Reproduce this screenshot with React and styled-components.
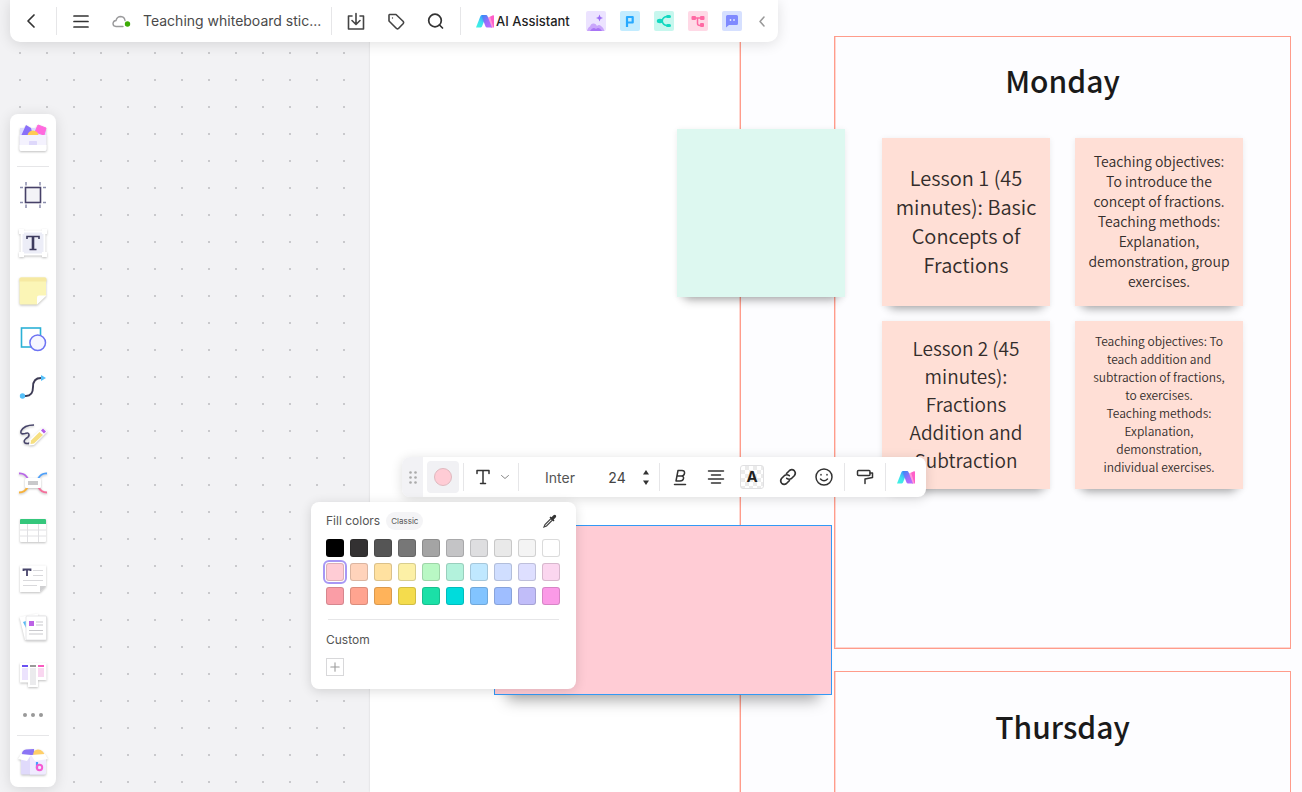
import React from "react";
import styled, { createGlobalStyle } from "styled-components";

const GlobalStyle = createGlobalStyle`
  * {
    box-sizing: border-box;
  }
  body {
    margin: 0;
    overflow: hidden;
    font-family: Inter, "Liberation Sans", sans-serif;
    color: #333;
  }
  button, input, select {
    margin: 0;
    padding: 0;
    border: 0;
    background: none;
    font: inherit;
    color: inherit;
  }
  button {
    cursor: pointer;
  }
  svg {
    display: block;
    overflow: visible;
  }
`;

// canvas
const Canvas = styled.main`
  position: relative;
  height: 100vh;
  overflow: hidden;
  background-color: #f2f2f4;
  background-image: radial-gradient(circle at 13px 13px, #c9c9cc 1px, transparent 1px);
  background-size: 27px 27px;
  background-position: 7px 13px;
`;
const Board = styled.section`
  position: absolute;
  top: 0;
  right: 0;
  bottom: 0;
  left: 370px;
  background: #fff;
  box-shadow: 0 0 2px rgba(0, 0, 0, 0.12);
`;
const Week = styled.section`
  position: absolute;
  top: -20px;
  right: -20px;
  bottom: -20px;
  left: 740px;
  border: 1px solid #ff9c8b;
  background: #fdfdff;
  box-shadow: -1px 0 0 rgba(255, 156, 139, 0.4);
`;
const Day = styled.section`
  position: absolute;
  top: ${props => props.top}px;
  left: 834px;
  width: 457px;
  height: 613px;
  padding-top: ${props => props.head}px;
  border: 1px solid #ff9c8b;
  background: #fdfdff;
  box-shadow: inset 1px -1px 0 rgba(255, 156, 139, 0.4);
  font-family: "Noto Sans CJK SC", "Noto Sans", sans-serif;
`;
const DayName = styled.h2`
  margin: 0;
  font-size: 30px;
  font-weight: 500;
  line-height: 52px;
  text-align: center;
  color: #1a1a1a;
`;
const Notes = styled.div`
  display: grid;
  grid-template-columns: 168px 168px;
  justify-content: center;
  gap: 15px 25px;
  padding-top: 32px;
`;
const Note = styled.article`
  display: flex;
  align-items: center;
  justify-content: center;
  width: 168px;
  height: 168px;
  padding: 0 ${props => props.inset || 12}px 3px;
  background: ${props => props.color};
  box-shadow: 0 11px 9px -8px rgba(0, 0, 0, 0.3), 0 1px 6px rgba(0, 0, 0, 0.08);
  font-size: ${props => props.size}px;
  font-weight: 350;
  line-height: ${props => props.leading}px;
  text-align: center;
  white-space: pre-line;
  color: #332d2b;
`;
const GreenNote = styled(Note)`
  position: absolute;
  top: 129px;
  left: 677px;
`;
const SelectedNote = styled(Note)`
  position: absolute;
  top: 525px;
  left: 494px;
  width: 338px;
  height: 170px;
  border: 1px solid #3399f5;
  box-shadow: 0 18px 14px -13px rgba(0, 0, 0, 0.35);
`;

// shared
const IconButton = styled.button`
  display: flex;
  flex: none;
  align-items: center;
  justify-content: center;
  gap: 7px;
  width: ${props => props.width || 36}px;
  height: ${props => props.height || 32}px;
`;
const Divider = styled.span`
  flex: none;
  width: 1px;
  height: 28px;
  background: #e6e6e8;
`;

// top bar
const TopBar = styled.header`
  position: absolute;
  top: 0;
  left: 10px;
  display: flex;
  align-items: center;
  height: 42px;
  border-radius: 0 0 10px 10px;
  background: #fff;
  box-shadow: 0 2px 14px rgba(0, 0, 0, 0.12);
`;
const FileName = styled.span`
  padding: 0 10px 0 6px;
  width: 194px;
  font-size: 14px;
  line-height: 20px;
  white-space: nowrap;
  color: #4a4a4a;
`;
const Assistant = styled.button`
  display: flex;
  align-items: center;
  gap: 2px;
  width: 125px;
  padding-left: 15px;
  font-size: 13px;
  font-weight: 500;
  white-space: nowrap;
  color: #1f1f1f;
`;
const Apps = styled.div`
  display: flex;
  gap: 14px;
`;

// side bar
const SideBar = styled.nav`
  position: absolute;
  top: 114px;
  left: 10px;
  display: flex;
  flex-direction: column;
  align-items: center;
  width: 46px;
  border-radius: 8px;
  background: #fff;
  box-shadow: 0 2px 14px rgba(0, 0, 0, 0.12);
`;
const Rule = styled.hr`
  width: ${props => props.width};
  height: 1px;
  margin: ${props => props.margin || "0"};
  border: 0;
  background: #e6e6e8;
`;
const Tool = styled(IconButton)`
  filter: ${props => (props.flat ? "none" : "drop-shadow(0 1px 1px rgba(0, 0, 0, 0.25))")};
`;

// context toolbar
const ContextBar = styled.div`
  position: absolute;
  top: 457px;
  left: 402px;
  display: flex;
  align-items: center;
  height: 40px;
  overflow: hidden;
  border-radius: 8px;
  background: #fff;
  box-shadow: 0 2px 12px rgba(0, 0, 0, 0.14);
`;
const Grip = styled(IconButton)`
  margin-right: 4px;
  background: #f2f2f5;
`;
const FillButton = styled(IconButton)`
  margin-right: 4px;
  border-radius: 4px;
  background: #f1f1f4;
`;
const Dot = styled.span`
  width: 18px;
  height: 18px;
  border: 1px solid #dfb9bf;
  border-radius: 50%;
  background: #ffccd5;
`;
const FontSelect = styled.select`
  appearance: none;
  width: 82px;
  height: 32px;
  font-size: 14px;
  text-align: center;
  color: #555;
`;
const SizeInput = styled.input`
  width: 32px;
  height: 32px;
  font-size: 14px;
  text-align: center;
  color: #444;
`;
const Stepper = styled.div`
  display: flex;
  flex-direction: column;
  gap: 2px;
  width: 26px;
`;
const TextColor = styled.span`
  width: 24px;
  height: 24px;
  border: 1px solid #e0e0e2;
  border-radius: 3px;
  background: repeating-conic-gradient(#ebebeb 0 25%, #fff 0 50%) 0 0 / 8px 8px;
  font-size: 15px;
  font-weight: 700;
  line-height: 22px;
  text-align: center;
  color: #222;
`;

// fill panel
const FillPanel = styled.section`
  position: absolute;
  top: 502px;
  left: 311px;
  width: 265px;
  padding: 10px 15px 13px;
  border-radius: 8px;
  background: #fff;
  box-shadow: 0 2px 12px rgba(0, 0, 0, 0.14);
  font-size: 12px;
  line-height: 18px;
  color: #555;
`;
const PanelHeader = styled.div`
  display: flex;
  align-items: center;
  gap: 6px;
  height: 18px;
`;
const Tag = styled.button`
  height: 18px;
  padding: 0 5px;
  border-radius: 9px;
  background: #f4f4f6;
  font-size: 8px;
  line-height: 18px;
`;
const Picker = styled(IconButton)`
  margin-left: auto;
`;
const Swatches = styled.div`
  display: grid;
  grid-template-columns: repeat(10, 18px);
  gap: 6px;
  padding: 9px 0 14px;
`;
const Swatch = styled.button`
  height: 18px;
  border: 1px solid rgba(0, 0, 0, 0.14);
  border-radius: 3px;
  background: ${props => props.color};
  outline: ${props => (props.selected ? "2px solid #a797f5" : "none")};
  outline-offset: 1px;
`;
const AddColor = styled(IconButton)`
  margin-top: 9px;
  border: 1px solid #d8d8da;
`;

const SWATCHES = [
  "#000000", "#333132", "#555555", "#777777", "#a4a4a4", "#c4c4c6", "#dedee0", "#e9e9e9", "#f4f4f4", "#ffffff",
  "#ffccd5", "#ffd3bb", "#ffe1a0", "#fcf0a6", "#b9f8c4", "#b3f2dc", "#c0e8ff", "#d0deff", "#dedfff", "#fbd6ef",
  "#fa9da6", "#ffa490", "#ffb35a", "#f4dc4d", "#1be0a7", "#00dcdc", "#82c4ff", "#9fbeff", "#c1bdf9", "#fb9ae7",
];

const LESSONS = [
  { text: "Lesson 1 (45 minutes): Basic Concepts of Fractions", size: 20, leading: 29 },
  {
    text:
      "Teaching objectives: To introduce the concept of fractions.\nTeaching methods: Explanation, demonstration, group exercises.",
    size: 14,
    leading: 20,
  },
  { text: "Lesson 2 (45 minutes): Fractions Addition and Subtraction", size: 19, leading: 28, inset: 22 },
  {
    text:
      "Teaching objectives: To teach addition and subtraction of fractions, to exercises.\nTeaching methods: Explanation, demonstration, individual exercises.",
    size: 12,
    leading: 18,
    inset: 16,
  },
];

const Line = ({ size = 20, color = "#333", weight = 1.5, children }) => (
  <svg
    width={size}
    height={size}
    viewBox="0 0 20 20"
    fill="none"
    stroke={color}
    strokeWidth={weight}
    strokeLinecap="round"
    strokeLinejoin="round"
  >
    {children}
  </svg>
);

const AiLogo = ({ id }) => (
  <svg width="18" height="13" viewBox="0 0 18 13">
    <defs>
      <linearGradient id={`${id}-a`} x1="0" y1="1" x2="0.6" y2="0">
        <stop offset="0" stopColor="#3ff5e0" />
        <stop offset="0.5" stopColor="#3fe0ee" />
        <stop offset="1" stopColor="#3a90ff" />
      </linearGradient>
      <linearGradient id={`${id}-b`} x1="0" y1="0" x2="0.7" y2="1">
        <stop offset="0" stopColor="#2f8cf5" />
        <stop offset="0.6" stopColor="#9d6cfb" />
        <stop offset="1" stopColor="#b46cff" />
      </linearGradient>
    </defs>
    <path d="M0 12.5 4.500 1Q5 0 6 0H10.500L6 11.500Q5.500 12.500 4.500 12.500Z" fill={`url(#${id}-a)`} />
    <path d="M11 3 17 .3Q18 0 18 1V12.500H15Z" fill="#ff5fc8" />
    <path d="M6 0H10Q11 0 11.500 1L16 12.500H11Q10 12.500 9.500 11.500L6.500 3.500Z" fill={`url(#${id}-b)`} />
    <path d="M12 2.500 14 1.500 17.500 12.500H16Z" fill="#fff" opacity=".35" />
  </svg>
);

const APPS = [
  {
    label: "AI image",
    art: (
      <>
        <rect width="20" height="20" rx="2" fill="#ece3ff" />
        <path d="M1 20Q2 16 4 15.500Q5 12 8 12.500Q10 12.500 11 15Q13 13 15 15Q18 17 18.500 20Z" fill="#c9a5fb" />
        <path d="M4 20Q7 15 10 18Q13 15 16 20Z" fill="#a874f5" />
        <path d="M13.500 3.500 14.500 6 17 7 14.500 8 13.500 10.500 12.500 8 10 7 12.500 6Z" fill="#9b6cf6" />
      </>
    ),
  },
  {
    label: "AI presentation",
    art: (
      <>
        <rect width="20" height="20" rx="2" fill="#c3ecff" />
        <path d="M7 16V6H12.700V11.500H7" fill="none" stroke="#27a9ff" strokeWidth="2.200" strokeLinejoin="round" />
      </>
    ),
  },
  {
    label: "AI mind map",
    art: (
      <>
        <rect width="20" height="20" rx="2" fill="#c7f7ee" />
        <path d="M15 5.500H12.500Q9 6 8 10Q9 14 12.500 14.500H15" fill="none" stroke="#12d8c0" strokeWidth="1.600" />
        <ellipse cx="6" cy="10" rx="3.200" ry="2.200" fill="#12d8c0" />
        <rect x="12" y="4" width="5" height="3" rx="1.500" fill="#12d8c0" />
        <rect x="12" y="13" width="5" height="3" rx="1.500" fill="#12d8c0" />
      </>
    ),
  },
  {
    label: "AI flowchart",
    art: (
      <>
        <rect width="20" height="20" rx="2" fill="#ffd9e6" />
        <path d="M5 7H14M9.500 7V12.500Q9.500 14.500 12 14.500" fill="none" stroke="#ff69a3" strokeWidth="1.500" />
        <rect x="3.500" y="5" width="4.500" height="4" rx="1" fill="#ff69a3" />
        <rect x="12" y="5" width="4.500" height="4" rx="1" fill="#ff69a3" />
        <rect x="12" y="12" width="4" height="4" rx="1" fill="#ff69a3" />
      </>
    ),
  },
  {
    label: "AI chat",
    art: (
      <>
        <rect width="20" height="20" rx="2" fill="#d6e0ff" />
        <path d="M5.500 4H14.500Q16 4 16 5.500V12.500Q16 14 14.500 14H7L4 16.500V5.500Q4 4 5.500 4Z" fill="#7f8aff" />
        <path d="M8.500 8V10M12 8V10" stroke="#dfe4ff" strokeWidth="1.400" />
      </>
    ),
  },
];

// every tool is drawn on a 28 x 28 grid
const TOOLS = [
  {
    label: "Frame",
    flat: true,
    art: (
      <>
        <path d="M7 1V27M21 1V27M1 6.500H27M1 21.500H27" stroke="#8d8fae" strokeWidth="1.500" />
        <rect x="6" y="6.500" width="16" height="15" fill="#f3f3f7" stroke="#fff" strokeWidth="4" />
        <rect x="6.500" y="6.500" width="15" height="15" fill="#f3f3f7" stroke="#464168" strokeWidth="1.600" />
      </>
    ),
  },
  {
    label: "Text",
    art: (
      <>
        <rect x="2.500" y="2.500" width="23" height="23" fill="#ecedf7" stroke="#fff" strokeWidth="2" />
        <path d="M0 0H5V5H0ZM23 0H28V5H23ZM0 23H5V28H0ZM23 23H28V28H23Z" fill="#fff" />
        <path d="M8 10V7.500H20V10M14 7.500V20.500M10.500 20.500H17.500" fill="none" stroke="#3d3b5e" strokeWidth="1.600" />
        <path d="M14 7.500V20" stroke="#3d3b5e" strokeWidth="2.600" />
      </>
    ),
  },
  {
    label: "Sticky note",
    art: (
      <>
        <path d="M2 .5H26Q27 .5 27 1.500V18.500L18 27.500H2Q.5 27.500 .5 26V2Q.5 .5 2 .5Z" fill="#fbf5b6" />
        <path d="M.5 4.500V2Q.5 .5 2 .5H26Q27.500 .5 27.500 2V4.500Z" fill="#f6e9a2" />
        <path d="M18 27.500V20.500Q18 18.500 20 18.500H27.500Z" fill="#fff" />
      </>
    ),
  },
  {
    label: "Shape",
    flat: true,
    art: (
      <>
        <rect x="2.500" y="3" width="19" height="19" fill="#fff" stroke="#2cb1d6" strokeWidth="1.600" />
        <circle cx="18.700" cy="17.700" r="7.800" fill="#f6f6ff" stroke="#6d73f3" strokeWidth="1.500" />
      </>
    ),
  },
  {
    label: "Connector",
    flat: true,
    art: (
      <>
        <path d="M3 23H7Q14 23 14 14Q14 5 22 5" fill="none" stroke="#3d3b55" strokeWidth="1.900" />
        <circle cx="3.500" cy="23" r="2.700" fill="#55bff8" />
        <path d="M22 2 27 5 22 8Z" fill="#55bff8" />
      </>
    ),
  },
  {
    label: "Pen",
    art: (
      <>
        <path
          d="M15 4Q5 4 2 10Q1 14 6 12.500Q10 11 10 14Q10 16 7 17.500Q4 20 6 22Q8 23 11 22"
          fill="none"
          stroke="#47446a"
          strokeWidth="1.600"
        />
        <path d="M10.500 18.500 23.500 6.500 28.500 10.500 15 24 10 24.500Z" fill="#fff" />
        <path d="M12 19.500 20.500 11 24 14 15 22.500 11.500 23Z" fill="#f6df80" />
        <path d="M22 9.500 24 7.500 27 10.500 25 12.500Z" fill="#b35be8" />
      </>
    ),
  },
  {
    label: "Mind map",
    art: (
      <>
        <path d="M0 4.500Q6 4 9 10" fill="none" stroke="#b967e8" strokeWidth="1.800" />
        <path d="M28 4.500Q22 4 19 10" fill="none" stroke="#4ea0fa" strokeWidth="1.800" />
        <path d="M0 23.500Q6 23.500 9 17.500" fill="none" stroke="#f7b23b" strokeWidth="1.800" />
        <path d="M28 23.500Q22 23.500 19 17.500" fill="none" stroke="#f56f9b" strokeWidth="1.800" />
        <rect x="6" y="9" width="16" height="10" rx="1.500" fill="#fff" />
        <rect x="9" y="12" width="10" height="4" fill="#c9c9cb" />
      </>
    ),
  },
  {
    label: "Table",
    art: (
      <>
        <rect x="1" y="2" width="26" height="23" rx="1" fill="#fff" />
        <path d="M1 13H27M1 19H27M8.500 7V25M19.500 7V25" stroke="#e0e0e3" />
        <path d="M1 7V3Q1 2 2 2H26Q27 2 27 3V7Z" fill="#35c77c" />
      </>
    ),
  },
  {
    label: "Document",
    art: (
      <>
        <path d="M1 .5H27V20.500L21 27H1Z" fill="#fff" />
        <path d="M4.500 6V4.500H11.500V6M8 4.500V11" fill="none" stroke="#47446a" strokeWidth="1.800" />
        <path d="M14 5.500H24M14 10.500H24M4 15.500H24M4 20.500H18" stroke="#d9d9dc" strokeWidth="1.200" />
        <path d="M21 27V21H27Z" fill="#cfcfd1" />
      </>
    ),
  },
  {
    label: "Card",
    art: (
      <>
        <path d="M.5 4 19 .5 21 24 6 27Z" fill="#fff" />
        <path d="M4 9 7 8V15Z" fill="#57b9f5" />
        <rect x="7" y="3" width="20.500" height="24" rx="1" fill="#fff" stroke="#dddde0" strokeWidth=".7" />
        <rect x="10" y="8" width="5" height="5" fill="#bc62e5" />
        <path d="M17 9H24M17 12H24M10 17.500H24M10 21H24" stroke="#c9c9cd" strokeWidth="1.200" />
      </>
    ),
  },
  {
    label: "Kanban",
    art: (
      <>
        <path d="M1 2H27.500V19H19V26H9V21.500H1Z" fill="#fff" />
        <path d="M3 5H9" stroke="#6a50f2" strokeWidth="2" />
        <path d="M11 5H17" stroke="#999" strokeWidth="2" />
        <path d="M19 5H25" stroke="#f95ac0" strokeWidth="2" />
        <path d="M3 7H9V19H3Z" fill="#ece3fd" />
        <path d="M11 7H17V24H11Z" fill="#ebebed" />
        <path d="M19 7H25V16H19Z" fill="#f9d7f0" />
      </>
    ),
  },
];

const App = () => (
  <>
    <GlobalStyle />
    <Canvas>
      <Board />
      <Week />
      <Day top={36} head={17}>
        <DayName>Monday</DayName>
        <Notes>
          {LESSONS.map(lesson => (
            <Note
              key={lesson.text}
              color="#ffdfd6"
              size={lesson.size}
              leading={lesson.leading}
              inset={lesson.inset}
            >
              {lesson.text}
            </Note>
          ))}
        </Notes>
      </Day>
      <Day top={671} head={28}>
        <DayName>Thursday</DayName>
      </Day>
      <GreenNote color="#ddf8f0" />
      <SelectedNote color="#ffccd5" />

      <TopBar>
        <IconButton width={46} aria-label="Back">
          <Line weight={1.7}>
            <path d="M11 4 5 10 11 16" />
          </Line>
        </IconButton>
        <Divider />
        <IconButton width={48} aria-label="Menu">
          <Line weight={1.7}>
            <path d="M3 5H17M3 10.500H17M3 16H17" />
          </Line>
        </IconButton>
        <IconButton width={32} aria-label="Saved to cloud">
          <Line color="#9a9a9c" weight={1.4}>
            <path d="M12 15.500H5Q2 15.300 2 12.500Q2.300 9.700 5 9.500Q6 5.500 9.800 5.500Q13.500 5.800 14 9.500" />
            <circle cx="16.500" cy="13" r="2.700" fill="#3cab05" stroke="none" />
          </Line>
        </IconButton>
        <FileName>Teaching whiteboard stic...</FileName>
        <Divider />
        <IconButton width={48} aria-label="Export">
          <Line weight={1.6} color="#444">
            <path d="M6 5H2.500V18H17.500V5H14M10 2.500V13M6 9.500 10 13.500 14 9.500" />
          </Line>
        </IconButton>
        <IconButton width={32} aria-label="Tag">
          <Line weight={1.6} color="#444">
            <path d="M3 4V10L10.500 17.500Q11.500 18.300 12.500 17.500L17.300 12.500Q18 11.500 17.300 10.500L10 3.500H3.500Z" />
            <circle cx="6.500" cy="7" r=".7" fill="#444" stroke="none" />
          </Line>
        </IconButton>
        <IconButton width={48} aria-label="Search">
          <Line weight={1.7}>
            <circle cx="9" cy="9.500" r="6.300" />
            <path d="M13.500 14 16.500 17" />
          </Line>
        </IconButton>
        <Divider />
        <Assistant>
          <AiLogo id="top" />
          AI Assistant
        </Assistant>
        <Apps>
          {APPS.map(app => (
            <IconButton key={app.label} width={20} height={20} aria-label={app.label}>
              <svg width="20" height="20" viewBox="0 0 20 20">
                {app.art}
              </svg>
            </IconButton>
          ))}
        </Apps>
        <IconButton width={36} aria-label="Collapse">
          <Line color="#999" weight={1.5}>
            <path d="M14 6 10 10.500 14 15" />
          </Line>
        </IconButton>
      </TopBar>

      <SideBar>
        <Tool width={46} height={48} aria-label="Templates">
          <svg width="28" height="28" viewBox="0 0 28 28">
            <path d="M1 4H27V25Q27 27 25 27H3Q1 27 1 25Z" fill="#dedcff" />
            <path d="M2 12 7 1 12 4 14 12Z" fill="#8a70fa" />
            <path d="M19 1 27 4 25 11 16 8Z" fill="#ff6ade" stroke="#ff6ade" strokeLinejoin="round" />
            <circle cx="14" cy="12" r="5.500" fill="#ffcb55" />
            <path d="M.5 11H27.500V25Q27.500 27 25.500 27H2.500Q.5 27 .5 25Z" fill="#f4f2fe" />
            <path d="M.5 21H27.500V25Q27.500 27 25.500 27H2.500Q.5 27 .5 25Z" fill="#fff" />
            <rect x="10" y="17" width="8" height="4" rx=".5" fill="#ded8fb" />
          </svg>
        </Tool>
        <Rule width="32px" margin="4px 0" />
        {TOOLS.map(tool => (
          <Tool key={tool.label} width={46} height={48} flat={tool.flat} aria-label={tool.label}>
            <svg width="28" height="28" viewBox="0 0 28 28">
              {tool.art}
            </svg>
          </Tool>
        ))}
        <IconButton width={46} height={32} aria-label="More tools">
          <svg width="20" height="4" viewBox="0 0 20 4" fill="#999">
            <circle cx="2" cy="2" r="2" />
            <circle cx="10" cy="2" r="2" />
            <circle cx="18" cy="2" r="2" />
          </svg>
        </IconButton>
        <Rule width="32px" margin="4px 0 0" />
        <Tool width={46} height={51} aria-label="Resources">
          <svg width="30" height="28" viewBox="0 0 30 28">
            <path d="M4 6Q4 2 8 1.500L16 1V8H4Z" fill="#8b74f5" />
            <path d="M15 8Q15 1.500 20 1.500Q26 2 26.500 8Z" fill="#ffcf68" />
            <path d="M3 7H27V25Q27 26.500 26 26.500H4Q3 26.500 3 25Z" fill="#e0dafb" />
            <path d="M12 7H28V25Q28 26.500 26.500 26.500H12Z" fill="#f0ebff" />
            <path d="M3 6 13 7 9 13 0 11ZM27 6 13 7 17 13 30 11Z" fill="#fff" />
            <path d="M19 14V20.500" stroke="#4a9bff" strokeWidth="2.200" />
            <circle cx="21.500" cy="19.500" r="2.700" fill="none" stroke="#f55bd3" strokeWidth="2" />
          </svg>
        </Tool>
      </SideBar>

      <ContextBar>
        <Grip width={21} height={40} aria-label="Move toolbar">
          <svg width="8" height="13" viewBox="0 0 8 13" fill="#aaa">
            {[1.5, 6.5, 11.5].map(y => (
              <React.Fragment key={y}>
                <circle cx="1.500" cy={y} r="1.300" />
                <circle cx="6.500" cy={y} r="1.300" />
              </React.Fragment>
            ))}
          </svg>
        </Grip>
        <FillButton width={32} aria-label="Fill color">
          <Dot />
        </FillButton>
        <Divider />
        <IconButton width={54} aria-label="Text style">
          <Line weight={1.5}>
            <path d="M4 6.500V3.500H16V6.500M10 3.500V16.500M7.500 16.500H12.500" />
          </Line>
          <Line size={10} weight={2} color="#888">
            <path d="M3 7 10 13 17 7" />
          </Line>
        </IconButton>
        <Divider />
        <FontSelect aria-label="Font" defaultValue="Inter">
          <option>Inter</option>
        </FontSelect>
        <SizeInput aria-label="Font size" defaultValue="24" />
        <Stepper>
          <IconButton width={26} height={8} aria-label="Larger">
            <svg width="6" height="5" viewBox="0 0 6 5" fill="#333">
              <path d="M3 0 6 4.500H0Z" />
            </svg>
          </IconButton>
          <IconButton width={26} height={8} aria-label="Smaller">
            <svg width="6" height="5" viewBox="0 0 6 5" fill="#333">
              <path d="M3 5 6 .5H0Z" />
            </svg>
          </IconButton>
        </Stepper>
        <Divider />
        <IconButton width={40} aria-label="Bold">
          <Line weight={1.5}>
            <path d="M8 3.500H12Q15 3.700 14.500 6.500Q14 9 11.500 9H7M11.500 9Q14 9.300 13.500 11.700Q13 14 10 14H6L8 3.500M4.500 17.500H15.500" />
          </Line>
        </IconButton>
        <IconButton width={32} aria-label="Align">
          <Line weight={1.5}>
            <path d="M2.500 4H17.500M5.500 8H14.500M2.500 12H17.500M5.500 16H14.500" />
          </Line>
        </IconButton>
        <IconButton width={40} aria-label="Text color">
          <TextColor>A</TextColor>
        </IconButton>
        <IconButton width={32} aria-label="Link">
          <Line weight={1.6}>
            <path d="M8.500 6.500 11.500 3.500Q14 1.700 16.300 3.700Q18.300 6 16.500 8.500L13.500 11.500Q11 13 8.700 11.300" />
            <path d="M11.500 13.500 8.500 16.500Q6 18.300 3.700 16.300Q1.700 14 3.500 11.500L6.500 8.500Q9 7 11.300 8.700" />
          </Line>
        </IconButton>
        <IconButton width={40} aria-label="Emoji">
          <Line weight={1.5}>
            <circle cx="10" cy="10" r="8" />
            <path d="M6.500 12Q10 15.500 13.500 12M7 7.500V8M13 7.500V8" />
          </Line>
        </IconButton>
        <Divider />
        <IconButton width={40} aria-label="Format painter">
          <Line weight={1.5}>
            <rect x="2.500" y="3.500" width="12.500" height="5" rx="1" />
            <path d="M15 6H17.500V10.500L10 12V16.500" />
          </Line>
        </IconButton>
        <Divider />
        <IconButton width={40} aria-label="AI">
          <AiLogo id="context" />
        </IconButton>
      </ContextBar>

      <FillPanel>
        <PanelHeader>
          <span>Fill colors</span>
          <Tag>Classic</Tag>
          <Picker width={22} height={18} aria-label="Pick a color">
            <svg width="14" height="14" viewBox="0 0 14 14">
              <path d="M1 13 2 10.500 8 4.500 9.500 6 3.500 12Z" fill="#fff" stroke="#444" strokeWidth="1.200" />
              <path d="M6.500 3.500 7.500 2.500 8.500 3.300 10.500 1.300Q12 .3 13 1.500Q13.500 2.500 12.700 3.500L10.700 5.500 11.500 6.500 10.500 7.500Z" fill="#333" />
            </svg>
          </Picker>
        </PanelHeader>
        <Swatches>
          {SWATCHES.map(color => (
            <Swatch key={color} color={color} selected={color === "#ffccd5"} aria-label={color} />
          ))}
        </Swatches>
        <Rule width="231px" margin="0 auto 11px" />
        <div>Custom</div>
        <AddColor width={18} height={18} aria-label="Add custom color">
          <Line size={14} color="#999">
            <path d="M10 4V16M4 10H16" />
          </Line>
        </AddColor>
      </FillPanel>
    </Canvas>
  </>
);

export default App;
